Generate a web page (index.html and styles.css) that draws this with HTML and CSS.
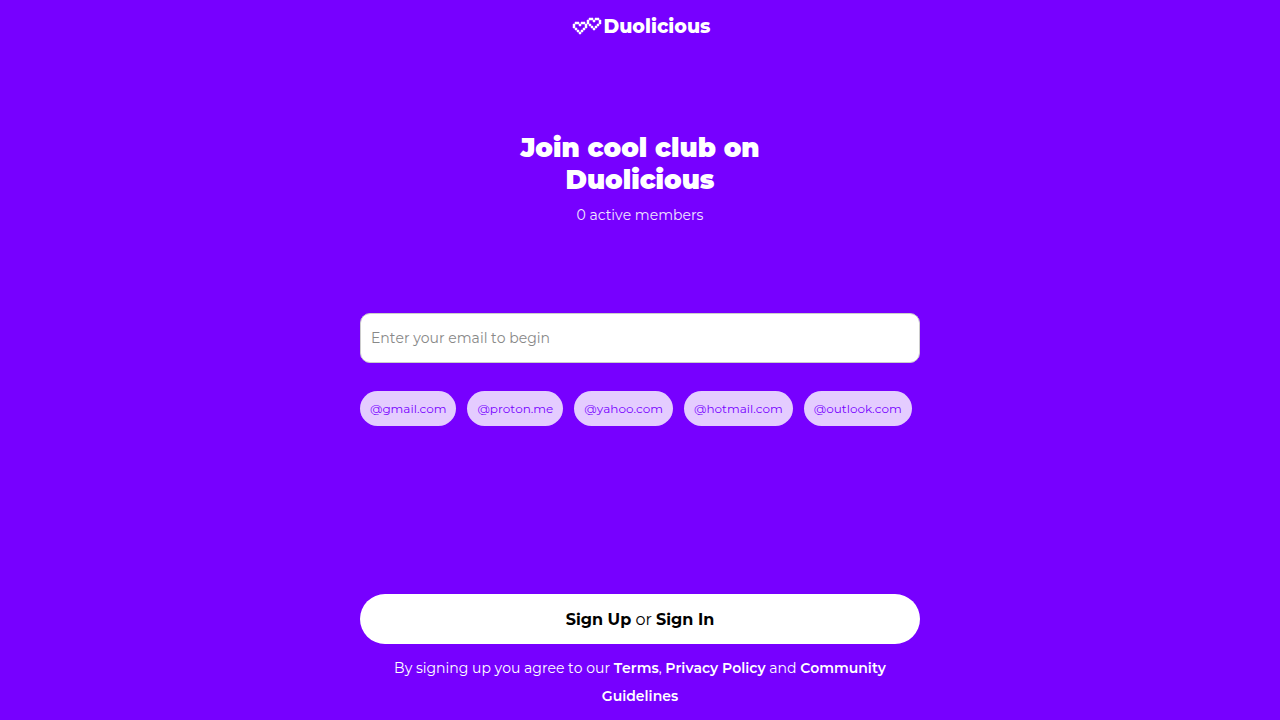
FILE: index.html
```html
<!DOCTYPE html>
<html lang="en">
<head>
<meta charset="utf-8">
<meta name="viewport" content="width=device-width, initial-scale=1">
<title>Duolicious</title>
<link rel="stylesheet" href="styles.css">
</head>
<body>
<div class="page">
  <header class="brand">
    <svg class="brand-icon" viewBox="0 0 30 18" width="30" height="18" aria-hidden="true">
      <defs>
        <path id="heart" d="M2 0h4v2h-4zM8 0h4v2h-4zM0 2h2v4h-2zM6 2h2v2h-2zM12 2h2v4h-2zM2 6h2v2h-2zM10 6h2v2h-2zM4 8h2v2h-2zM8 8h2v2h-2zM6 10h2v2h-2z"/>
      </defs>
      <use href="#heart" x="1" y="5" fill="#fff" stroke="#fff" stroke-width=".5"/>
      <use href="#heart" x="15" y="1" fill="#fff" stroke="#fff" stroke-width=".5"/>
    </svg>
    <span class="brand-name">Duolicious</span>
  </header>
  <main class="content">
    <section class="intro">
      <h1 class="title">Join cool club on Duolicious</h1>
      <p class="members">0 active members</p>
    </section>
    <form class="signup">
      <input class="email" type="email" aria-label="Email" placeholder="Enter your email to begin">
      <div class="domains">
        <button class="domain" type="button">@gmail.com</button>
        <button class="domain" type="button">@proton.me</button>
        <button class="domain" type="button">@yahoo.com</button>
        <button class="domain" type="button">@hotmail.com</button>
        <button class="domain" type="button">@outlook.com</button>
      </div>
    </form>
    <footer class="actions">
      <button class="submit" type="button"><strong>Sign Up</strong> or <strong>Sign In</strong></button>
      <p class="legal">By signing up you agree to our <a href="#terms">Terms</a>, <a href="#privacy">Privacy Policy</a> and <a href="#guidelines">Community Guidelines</a></p>
    </footer>
  </main>
</div>
</body>
</html>
```
FILE: styles.css
```css
* {
  box-sizing: border-box;
}

body {
  margin: 0;
  background: #7700ff;
  color: #fff;
  font-family: Montserrat, Inter, sans-serif;
  font-size: 14px;
  font-kerning: none;
}

button,
input {
  font-family: inherit;
  font-kerning: inherit;
}

.page {
  display: flex;
  flex-direction: column;
  min-height: 100vh;
}

.brand {
  display: flex;
  align-items: center;
  justify-content: center;
  gap: 2px;
  height: 52px;
  padding-left: 2px;
}

.brand-name {
  font-size: 19px;
  font-weight: 800;
}

.content {
  display: flex;
  flex: 1;
  flex-direction: column;
  justify-content: space-between;
  width: 100%;
  max-width: 600px;
  margin: 0 auto;
  padding: 80px 20px 10px;
}

.intro {
  text-align: center;
}

.title {
  max-width: 280px;
  margin: 0 auto;
  font-size: 26px;
  font-weight: 900;
  line-height: 32px;
}

.members {
  margin: 8px 0 0;
  line-height: 22px;
  opacity: 0.9;
}

.signup {
  padding-bottom: 82px;
}

.email {
  display: block;
  width: 100%;
  height: 50px;
  padding: 0 10px;
  border: 1px solid #ccc;
  border-radius: 10px;
  background: #fff;
  color: #000;
  font-size: 14px;
}

.email::placeholder {
  color: #888;
}

.domains {
  display: flex;
  flex-wrap: wrap;
  gap: 11px;
  margin-top: 28px;
}

.domain {
  height: 35px;
  padding: 0 10px;
  border: 0;
  border-radius: 18px;
  background: #e4ccff;
  color: #7700ff;
  font-size: 12px;
}

.submit {
  width: 100%;
  height: 50px;
  border: 0;
  border-radius: 25px;
  background: #fff;
  color: #000;
  font-size: 16px;
}

.legal {
  margin: 10px 0 0;
  line-height: 28px;
  text-align: center;
}

.legal a {
  color: inherit;
  font-weight: 600;
  text-decoration: none;
}
```
